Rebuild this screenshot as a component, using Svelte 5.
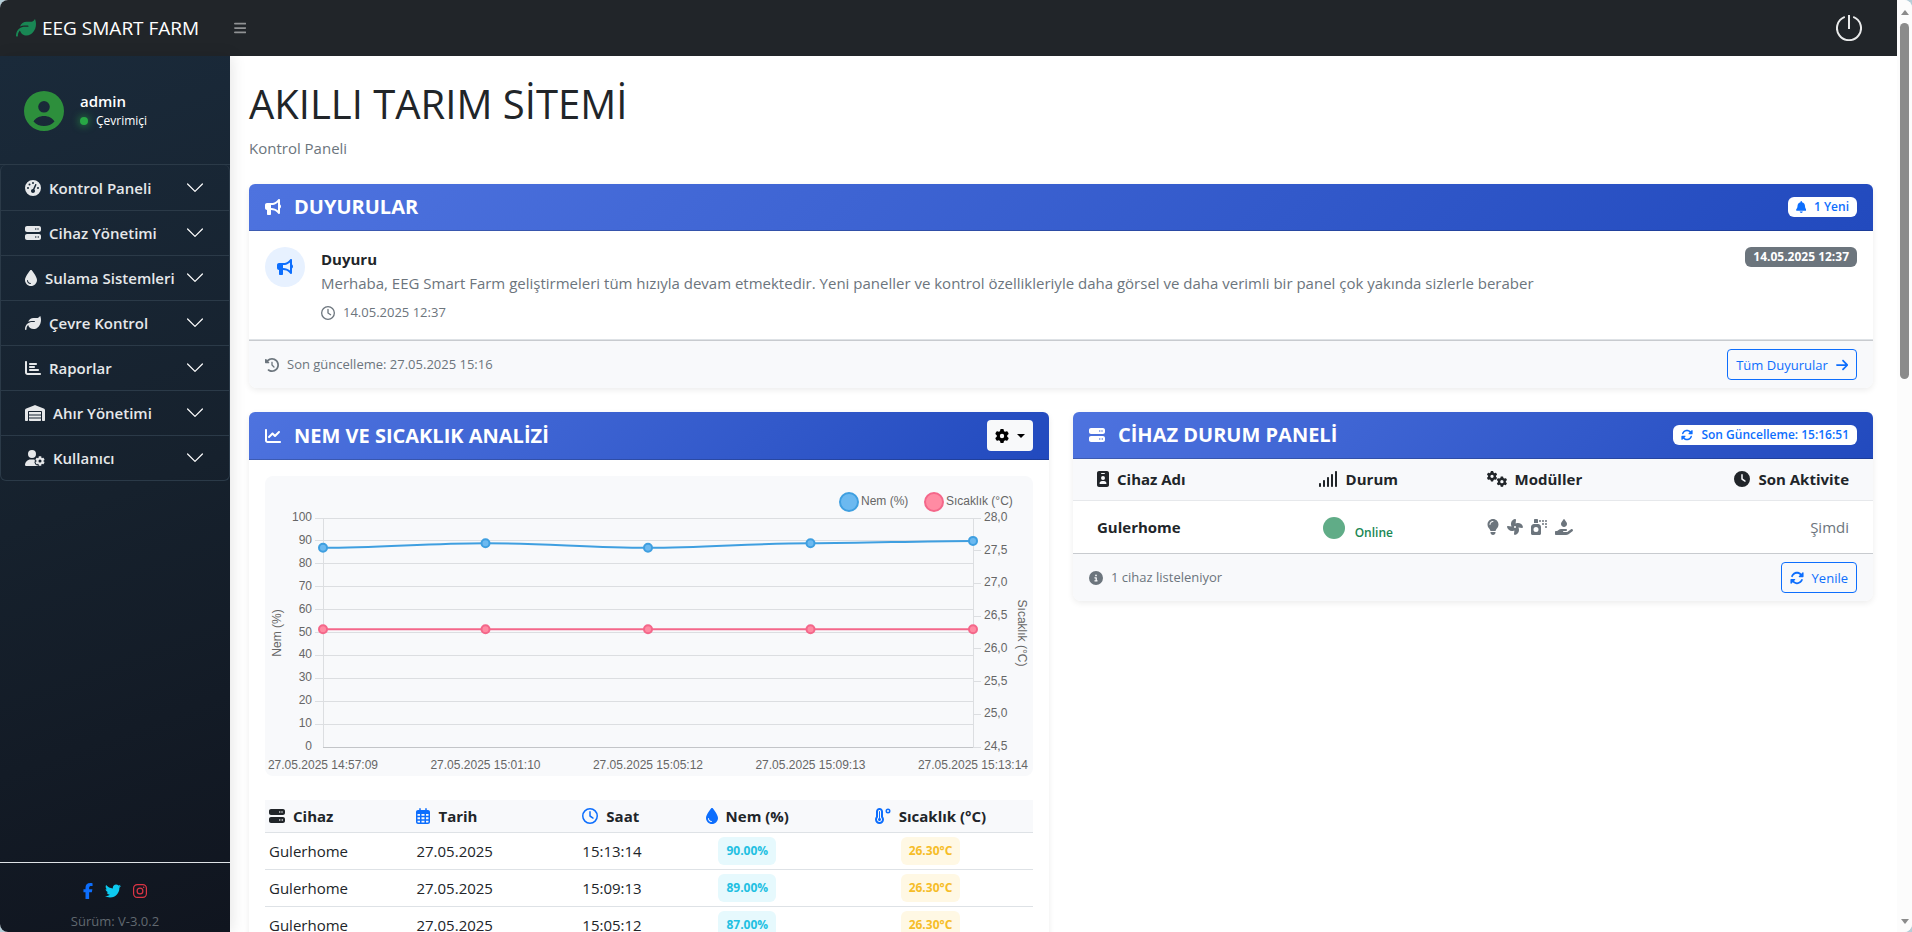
<script lang="ts">
  type IconShape = { w: number; d: string; copies?: string[] }

  const gearPath =
    'M495.9 166.6c3.2 8.7 .5 18.4-6.4 24.6l-43.3 39.4c1.1 8.3 1.7 16.8 1.7 25.4s-.6 17.1-1.7 25.4l43.3 39.4c6.9 6.2 9.6 15.9 6.4 24.6c-4.4 11.9-9.7 23.3-15.8 34.3l-4.7 8.1c-6.6 11-14 21.4-22.1 31.2c-5.9 7.2-15.7 9.6-24.5 6.8l-55.7-17.7c-13.4 10.3-28.2 18.9-44 25.4l-12.5 57.1c-2 9.1-9 16.3-18.2 17.8c-13.8 2.3-28 3.5-42.5 3.5s-28.7-1.2-42.5-3.5c-9.2-1.5-16.2-8.7-18.2-17.8l-12.5-57.1c-15.8-6.5-30.6-15.1-44-25.4L83.1 425.9c-8.8 2.8-18.6 .3-24.5-6.8c-8.1-9.8-15.5-20.2-22.1-31.2l-4.7-8.1c-6.1-11-11.4-22.4-15.8-34.3c-3.2-8.7-.5-18.4 6.4-24.6l43.3-39.4C64.6 273.1 64 264.6 64 256s.6-17.1 1.7-25.4L22.4 191.2c-6.9-6.2-9.6-15.9-6.4-24.6c4.4-11.9 9.7-23.3 15.8-34.3l4.7-8.1c6.6-11 14-21.4 22.1-31.2c5.9-7.2 15.7-9.6 24.5-6.8l55.7 17.7c13.4-10.3 28.2-18.9 44-25.4l12.5-57.1c2-9.1 9-16.3 18.2-17.8C227.3 1.2 241.5 0 256 0s28.7 1.2 42.5 3.5c9.2 1.5 16.2 8.7 18.2 17.8l12.5 57.1c15.8 6.5 30.6 15.1 44 25.4l55.7-17.7c8.8-2.8 18.6-.3 24.5 6.8c8.1 9.8 15.5 20.2 22.1 31.2l4.7 8.1c6.1 11 11.4 22.4 15.8 34.3zM256 336a80 80 0 1 0 0-160 80 80 0 1 0 0 160z'

  const icons: Record<string, IconShape> = {
    leaf: { w: 512, d: 'M272 96c-78.6 0-145.1 51.5-167.7 122.5c33.6-17 71.5-26.5 111.7-26.5h88c8.8 0 16 7.2 16 16s-7.2 16-16 16H288 216s0 0 0 0c-16.6 0-32.7 1.9-48.3 5.4c-25.9 5.9-49.9 16.4-71.4 30.7c0 0 0 0 0 0C38.3 298.8 0 364.9 0 440v16c0 13.3 10.7 24 24 24s24-10.7 24-24V440c0-48.7 20.7-92.5 53.8-123.2C121.6 392.3 190.3 448 272 448l1 0c132.1-.7 239-130.9 239-291.4c0-42.6-7.5-83.1-21.1-119.6c-2.6-6.9-12.7-6.6-16.2-.1C455.9 72.1 418.7 96 376 96L272 96z' },
    bars: { w: 448, d: 'M0 96C0 78.3 14.3 64 32 64H416c17.7 0 32 14.3 32 32s-14.3 32-32 32H32C14.3 128 0 113.7 0 96zM0 256c0-17.7 14.3-32 32-32H416c17.7 0 32 14.3 32 32s-14.3 32-32 32H32c-17.7 0-32-14.3-32-32zM448 416c0 17.7-14.3 32-32 32H32c-17.7 0-32-14.3-32-32s14.3-32 32-32H416c17.7 0 32 14.3 32 32z' },
    gauge: { w: 512, d: 'M0 256a256 256 0 1 1 512 0A256 256 0 1 1 0 256zM288 96a32 32 0 1 0 -64 0 32 32 0 1 0 64 0zM256 416c35.3 0 64-28.7 64-64c0-17.4-6.9-33.1-18.1-44.6L366 161.7c5.3-12.1-.2-26.3-12.3-31.6s-26.3 .2-31.6 12.3L257.9 288c-.6 0-1.3 0-1.9 0c-35.3 0-64 28.7-64 64s28.7 64 64 64zM176 144a32 32 0 1 0 -64 0 32 32 0 1 0 64 0zM96 288a32 32 0 1 0 0-64 32 32 0 1 0 0 64zm352-32a32 32 0 1 0 -64 0 32 32 0 1 0 64 0z' },
    server: { w: 512, d: 'M64 32C28.7 32 0 60.7 0 96v64c0 35.3 28.7 64 64 64H448c35.3 0 64-28.7 64-64V96c0-35.3-28.7-64-64-64H64zm280 72a24 24 0 1 1 0 48 24 24 0 1 1 0-48zm48 24a24 24 0 1 1 48 0 24 24 0 1 1 -48 0zM64 288c-35.3 0-64 28.7-64 64v64c0 35.3 28.7 64 64 64H448c35.3 0 64-28.7 64-64V352c0-35.3-28.7-64-64-64H64zm280 72a24 24 0 1 1 0 48 24 24 0 1 1 0-48zm56 24a24 24 0 1 1 48 0 24 24 0 1 1 -48 0z' },
    droplet: { w: 384, d: 'M192 512C86 512 0 426 0 320C0 228.8 130.2 57.7 166.6 11.7C172.6 4.2 181.5 0 191.1 0h1.8c9.6 0 18.5 4.2 24.5 11.7C253.8 57.7 384 228.8 384 320c0 106-86 192-192 192zM96 336c0-8.8-7.2-16-16-16s-16 7.2-16 16c0 61.9 50.1 112 112 112c8.8 0 16-7.2 16-16s-7.2-16-16-16c-44.2 0-80-35.8-80-80z' },
    chartBar: { w: 512, d: 'M32 32c17.7 0 32 14.3 32 32V400c0 8.8 7.2 16 16 16H480c17.7 0 32 14.3 32 32s-14.3 32-32 32H80c-44.2 0-80-35.8-80-80V64C0 46.3 14.3 32 32 32zm96 96c0-17.7 14.3-32 32-32l192 0c17.7 0 32 14.3 32 32s-14.3 32-32 32l-192 0c-17.7 0-32-14.3-32-32zm32 64H288c17.7 0 32 14.3 32 32s-14.3 32-32 32H160c-17.7 0-32-14.3-32-32s14.3-32 32-32zm0 96H416c17.7 0 32 14.3 32 32s-14.3 32-32 32H160c-17.7 0-32-14.3-32-32s14.3-32 32-32z' },
    warehouse: { w: 640, d: 'M0 488V171.3c0-26.2 15.9-49.7 40.2-59.4L308.1 4.8c7.6-3.1 16.1-3.1 23.8 0L599.8 111.9c24.3 9.7 40.2 33.3 40.2 59.4V488c0 13.3-10.7 24-24 24H568c-13.3 0-24-10.7-24-24V224c0-17.7-14.3-32-32-32H128c-17.7 0-32 14.3-32 32V488c0 13.3-10.7 24-24 24H24c-13.3 0-24-10.7-24-24zm488 24l-336 0c-13.3 0-24-10.7-24-24V432H512l0 56c0 13.3-10.7 24-24 24zM128 400V336H512v64H128zm0-96V224H512l0 80H128z' },
    userGear: { w: 640, d: 'M224 0a128 128 0 1 1 0 256A128 128 0 1 1 224 0zM178.3 304h91.4c11.8 0 23.4 1.2 34.5 3.3c-2.1 18.5 7.4 35.6 21.8 44.8c-16.6 10.6-26.7 31.6-20 53.3c4 12.9 9.4 25.5 16.4 37.6s15.2 23.1 24.4 33c15.7 16.9 39.6 18.4 57.2 8.7v.9c0 9.2 2.7 18.5 7.9 26.3H29.7C13.3 512 0 498.7 0 482.3C0 383.8 79.8 304 178.3 304zM436 218.2c0-7 4.5-13.3 11.3-14.8c10.5-2.4 21.5-3.7 32.7-3.7s22.2 1.3 32.7 3.7c6.8 1.5 11.3 7.8 11.3 14.8v30.6c7.9 3.4 15.4 7.7 22.3 12.8l24.9-14.3c6.1-3.5 13.7-2.7 18.5 2.4c7.6 8.1 14.3 17.2 20.1 27.2s10.3 20.4 13.5 31c2.1 6.7-1.1 13.7-7.2 17.2l-25 14.4c.4 4 .7 8.1 .7 12.3s-.2 8.2-.7 12.3l25 14.4c6.1 3.5 9.2 10.5 7.2 17.2c-3.3 10.6-7.8 21-13.5 31s-12.5 19.1-20.1 27.2c-4.8 5.1-12.5 5.9-18.5 2.4l-24.9-14.3c-6.9 5.1-14.3 9.4-22.3 12.8l0 30.6c0 7-4.5 13.3-11.3 14.8c-10.5 2.4-21.5 3.7-32.7 3.7s-22.2-1.3-32.7-3.7c-6.8-1.5-11.3-7.8-11.3-14.8V454.8c-8-3.4-15.6-7.7-22.5-12.9l-24.7 14.3c-6.1 3.5-13.7 2.7-18.5-2.4c-7.6-8.1-14.3-17.2-20.1-27.2s-10.3-20.4-13.5-31c-2.1-6.7 1.1-13.7 7.2-17.2l24.8-14.3c-.4-4.1-.7-8.2-.7-12.4s.2-8.3 .7-12.4L343.8 325c-6.1-3.5-9.2-10.5-7.2-17.2c3.3-10.6 7.7-21 13.5-31s12.5-19.1 20.1-27.2c4.8-5.1 12.4-5.9 18.5-2.4l24.8 14.3c6.9-5.1 14.5-9.4 22.5-12.9V218.2zm92.1 133.5a48.1 48.1 0 1 0 -96.1 0 48.1 48.1 0 1 0 96.1 0z' },
    facebook: { w: 320, d: 'M80 299.3V512H196V299.3h86.5l18-97.8H196V166.9c0-51.7 20.3-71.5 72.7-71.5c16.3 0 29.4 .4 37 1.2V7.9C291.4 4 256.4 0 236.2 0C129.3 0 80 50.5 80 159.4v42.1H14v97.8H80z' },
    twitter: { w: 512, d: 'M459.37 151.716c.325 4.548.325 9.097.325 13.645 0 138.72-105.583 298.558-298.558 298.558-59.452 0-114.68-17.219-161.137-47.106 8.447.974 16.568 1.299 25.34 1.299 49.055 0 94.213-16.568 130.274-44.832-46.132-.975-84.792-31.188-98.112-72.772 6.498.974 12.995 1.624 19.818 1.624 9.421 0 18.843-1.3 27.614-3.573-48.081-9.747-84.143-51.98-84.143-102.985v-1.299c13.969 7.797 30.214 12.67 47.431 13.319-28.264-18.843-46.781-51.005-46.781-87.391 0-19.492 5.197-37.36 14.294-52.954 51.655 63.675 129.3 105.258 216.365 109.807-1.624-7.797-2.599-15.918-2.599-24.04 0-57.828 46.782-104.934 104.934-104.934 30.213 0 57.502 12.67 76.67 33.137 23.715-4.548 46.456-13.32 66.599-25.34-7.798 24.366-24.366 44.833-46.132 57.827 21.117-2.273 41.584-8.122 60.426-16.243-14.292 20.791-32.161 39.308-52.628 54.253z' },
    bullhorn: { w: 512, d: 'M480 32c0-12.9-7.8-24.6-19.8-29.6s-25.7-2.2-34.9 6.9L381.7 53c-48 48-113.1 75-181 75H192 160 64c-35.3 0-64 28.7-64 64v96c0 35.3 28.7 64 64 64l0 128c0 17.7 14.3 32 32 32h64c17.7 0 32-14.3 32-32V352l8.7 0c67.9 0 133 27 181 75l43.6 43.6c9.2 9.2 22.9 11.9 34.9 6.9s19.8-16.6 19.8-29.6V300.4c18.6-8.8 32-32.5 32-60.4s-13.4-51.6-32-60.4V32zm-64 76.7V240 371.3C357.2 317.8 280.5 288 200.7 288H192V192h8.7c79.8 0 156.5-29.8 215.3-83.3z' },
    bell: { w: 448, d: 'M224 0c-17.7 0-32 14.3-32 32V51.2C119 66 64 130.6 64 208v18.8c0 47-17.3 92.4-48.5 127.6l-7.4 8.3c-8.4 9.4-10.4 22.9-5.3 34.4S19.4 416 32 416H416c12.6 0 24-7.4 29.2-18.9s3.1-25-5.3-34.4l-7.4-8.3C401.3 319.2 384 273.9 384 226.8V208c0-77.4-55-142-128-156.8V32c0-17.7-14.3-32-32-32zm45.3 493.3c12-12 18.7-28.3 18.7-45.3H224 160c0 17 6.7 33.3 18.7 45.3s28.3 18.7 45.3 18.7s33.3-6.7 45.3-18.7z' },
    clock: { w: 512, d: 'M464 256A208 208 0 1 1 48 256a208 208 0 1 1 416 0zM0 256a256 256 0 1 0 512 0A256 256 0 1 0 0 256zM232 120V256c0 8 4 15.5 10.7 20l96 64c11 7.4 25.9 4.4 33.3-6.7s4.4-25.9-6.7-33.3L280 243.2V120c0-13.3-10.7-24-24-24s-24 10.7-24 24z' },
    clockSolid: { w: 512, d: 'M256 0a256 256 0 1 1 0 512A256 256 0 1 1 256 0zM232 120V256c0 8 4 15.5 10.7 20l96 64c11 7.4 25.9 4.4 33.3-6.7s4.4-25.9-6.7-33.3L280 243.2V120c0-13.3-10.7-24-24-24s-24 10.7-24 24z' },
    history: { w: 512, d: 'M75 75L41 41C25.9 25.9 0 36.6 0 57.9V168c0 13.3 10.7 24 24 24H134.1c21.4 0 32.1-25.9 17-41l-30.8-30.8C155 85.5 203 64 256 64c106 0 192 86 192 192s-86 192-192 192c-40.8 0-78.6-12.7-109.7-34.4c-14.5-10.1-34.4-6.6-44.6 7.9s-6.6 34.4 7.9 44.6C151.2 495 201.7 512 256 512c141.4 0 256-114.6 256-256S397.4 0 256 0C185.3 0 121.3 28.7 75 75zm181 53c-13.3 0-24 10.7-24 24V256c0 6.4 2.5 12.5 7 17l72 72c9.4 9.4 24.6 9.4 33.9 0s9.4-24.6 0-33.9l-65-65V152c0-13.3-10.7-24-24-24z' },
    arrowRight: { w: 448, d: 'M438.6 278.6c12.5-12.5 12.5-32.8 0-45.3l-160-160c-12.5-12.5-32.8-12.5-45.3 0s-12.5 32.8 0 45.3L338.8 224 32 224c-17.7 0-32 14.3-32 32s14.3 32 32 32l306.7 0L233.4 393.4c-12.5 12.5-12.5 32.8 0 45.3s32.8 12.5 45.3 0l160-160z' },
    chartLine: { w: 512, d: 'M64 64c0-17.7-14.3-32-32-32S0 46.3 0 64V400c0 44.2 35.8 80 80 80H480c17.7 0 32-14.3 32-32s-14.3-32-32-32H80c-8.8 0-16-7.2-16-16V64zm406.6 86.6c12.5-12.5 12.5-32.8 0-45.3s-32.8-12.5-45.3 0L320 210.7l-57.4-57.4c-12.5-12.5-32.8-12.5-45.3 0l-112 112c-12.5 12.5-12.5 32.8 0 45.3s32.8 12.5 45.3 0L240 221.3l57.4 57.4c12.5 12.5 32.8 12.5 45.3 0l128-128z' },
    gear: { w: 512, d: gearPath },
    gears: { w: 640, d: gearPath, copies: ['translate(-8 0) scale(.66)', 'translate(308 172) scale(.66)'] },
    rotate: { w: 512, d: 'M142.9 142.9c62.2-62.2 162.7-62.5 225.3-1L327 183c-6.9 6.9-8.9 17.2-5.2 26.2s12.5 14.8 22.2 14.8H463.5c0 0 0 0 0 0H472c13.3 0 24-10.7 24-24V72c0-9.7-5.8-18.5-14.8-22.2s-19.3-1.7-26.2 5.2L413.4 96.6c-87.6-86.5-228.7-86.2-315.8 1C73.2 122 55.6 150.7 44.8 181.4c-5.9 16.7 2.9 34.9 19.5 40.8s34.9-2.9 40.8-19.5c7.7-21.8 20.2-42.3 37.8-59.8zM16 312v7.6 .7V440c0 9.7 5.8 18.5 14.8 22.2s19.3 1.7 26.2-5.2l41.6-41.6c87.6 86.5 228.7 86.2 315.8-1c24.4-24.4 42.1-53.1 52.9-83.7c5.9-16.7-2.9-34.9-19.5-40.8s-34.9 2.9-40.8 19.5c-7.7 21.8-20.2 42.3-37.8 59.8c-62.2 62.2-162.7 62.5-225.3 1L185 329c6.9-6.9 8.9-17.2 5.2-26.2s-12.5-14.8-22.2-14.8H48.4h-.7H40c-13.3 0-24 10.7-24 24z' },
    info: { w: 512, d: 'M256 512A256 256 0 1 0 256 0a256 256 0 1 0 0 512zM216 336h24V272H216c-13.3 0-24-10.7-24-24s10.7-24 24-24h48c13.3 0 24 10.7 24 24v88h8c13.3 0 24 10.7 24 24s-10.7 24-24 24H216c-13.3 0-24-10.7-24-24s10.7-24 24-24zm40-208a32 32 0 1 1 0 64 32 32 0 1 1 0-64z' },
    idBadge: { w: 384, d: 'M64 0C28.7 0 0 28.7 0 64V448c0 35.3 28.7 64 64 64H320c35.3 0 64-28.7 64-64V64c0-35.3-28.7-64-64-64H64zm96 320h64c44.2 0 80 35.8 80 80c0 8.8-7.2 16-16 16H96c-8.8 0-16-7.2-16-16c0-44.2 35.8-80 80-80zm-32-96a64 64 0 1 1 128 0 64 64 0 1 1 -128 0zM144 64h96c8.8 0 16 7.2 16 16s-7.2 16-16 16H144c-8.8 0-16-7.2-16-16s7.2-16 16-16z' },
    signal: { w: 640, d: 'M576 0c17.7 0 32 14.3 32 32V480c0 17.7-14.3 32-32 32s-32-14.3-32-32V32c0-17.7 14.3-32 32-32zM448 96c17.7 0 32 14.3 32 32V480c0 17.7-14.3 32-32 32s-32-14.3-32-32V128c0-17.7 14.3-32 32-32zM352 224V480c0 17.7-14.3 32-32 32s-32-14.3-32-32V224c0-17.7 14.3-32 32-32s32 14.3 32 32zM192 288c17.7 0 32 14.3 32 32V480c0 17.7-14.3 32-32 32s-32-14.3-32-32V320c0-17.7 14.3-32 32-32zM96 416v64c0 17.7-14.3 32-32 32s-32-14.3-32-32V416c0-17.7 14.3-32 32-32s32 14.3 32 32z' },
    lightbulb: { w: 384, d: 'M272 384c9.6-31.9 29.5-59.1 49.2-86.2l0 0c5.2-7.1 10.4-14.2 15.4-21.4c19.8-28.5 31.4-63 31.4-100.3C368 78.8 289.2 0 192 0S16 78.8 16 176c0 37.3 11.6 71.9 31.4 100.3c5 7.2 10.2 14.3 15.4 21.4l0 0c19.8 27.1 39.7 54.4 49.2 86.2H272zM192 512c44.2 0 80-35.8 80-80V416H112v16c0 44.2 35.8 80 80 80zM112 176c0 8.8-7.2 16-16 16s-16-7.2-16-16c0-61.9 50.1-112 112-112c8.8 0 16 7.2 16 16s-7.2 16-16 16c-44.2 0-80 35.8-80 80z' },
    fan: { w: 512, d: 'M258.6 0c-1.7 0-3.4 .1-5.1 .5C168 17 115.6 102.3 130.5 189.3c2.9 17 8.4 32.9 15.9 47.4L32 224H29.4C13.2 224 0 237.2 0 253.4c0 1.7 .1 3.4 .5 5.1C17 344 102.3 396.4 189.3 381.5c17-2.9 32.9-8.4 47.4-15.9L224 480v2.6c0 16.2 13.2 29.4 29.4 29.4c1.7 0 3.4-.1 5.1-.5C344 495 396.4 409.7 381.5 322.7c-2.9-17-8.4-32.9-15.9-47.4L480 288h2.6c16.2 0 29.4-13.2 29.4-29.4c0-1.7-.1-3.4-.5-5.1C495 168 409.7 115.6 322.7 130.5c-17 2.9-32.9 8.4-47.4 15.9L288 32V29.4C288 13.2 274.8 0 258.6 0zM256 224a32 32 0 1 1 0 64 32 32 0 1 1 0-64z' },
    spray: { w: 512, d: 'M128 0h64c17.7 0 32 14.3 32 32v96H96V32c0-17.7 14.3-32 32-32zM0 256c0-53 43-96 96-96H224c53 0 96 43 96 96V464c0 26.5-21.5 48-48 48H48c-26.5 0-48-21.5-48-48V256zm240 80A80 80 0 1 0 80 336a80 80 0 1 0 160 0zM256 64a32 32 0 1 1 64 0 32 32 0 1 1 -64 0zM384 32a32 32 0 1 1 0 64 32 32 0 1 1 0-64zm64 32a32 32 0 1 1 64 0 32 32 0 1 1 -64 0zm32 64a32 32 0 1 1 0 64 32 32 0 1 1 0-64zm0 96a32 32 0 1 1 0 64 32 32 0 1 1 0-64zM352 160a32 32 0 1 1 64 0 32 32 0 1 1 -64 0z' },
    handDroplet: { w: 576, d: 'M275.5 6.6C278.3 2.5 283 0 288 0s9.7 2.5 12.5 6.6L366.8 103C378 119.3 384 138.6 384 158.3V160c0 53-43 96-96 96s-96-43-96-96v-1.7c0-19.8 6-39 17.2-55.3L275.5 6.6zM568.2 336.3c13.1 17.8 9.3 42.8-8.5 55.9L433.1 485.5c-23.4 17.2-51.6 26.5-80.7 26.5H192 32c-17.7 0-32-14.3-32-32V416c0-17.7 14.3-32 32-32H68.8l44.9-36c22.7-18.2 50.9-28 80-28H272h16 64c17.7 0 32 14.3 32 32s-14.3 32-32 32H288 272c-8.8 0-16 7.2-16 16s7.2 16 16 16H392.6l119.7-88.2c17.8-13.1 42.8-9.3 55.9 8.5z' },
    calendar: { w: 448, d: 'M128 0c13.3 0 24 10.7 24 24V64H296V24c0-13.3 10.7-24 24-24s24 10.7 24 24V64h40c35.3 0 64 28.7 64 64V448c0 35.3-28.7 64-64 64H64c-35.3 0-64-28.7-64-64V128C0 92.7 28.7 64 64 64h40V24c0-13.3 10.7-24 24-24zM48 192v56h80V192zM176 192v56h96V192zM320 192v56h80V192zM48 296v64h80V296zM176 296v64h96V296zM320 296v64h80V296zM48 408v40c0 8.8 7.2 16 16 16h64V408zM176 408v56h96V408zM320 408v56h64c8.8 0 16-7.2 16-16V408z' },
    temperature: { w: 512, d: 'M416 64a32 32 0 1 1 0 64 32 32 0 1 1 0-64zm0 112A80 80 0 1 0 416 16a80 80 0 1 0 0 160zM96 112c0-26.5 21.5-48 48-48s48 21.5 48 48V276.5c0 17.3 7.1 31.9 15.3 42.5C217.8 332.6 224 349.5 224 368c0 44.2-35.8 80-80 80s-80-35.8-80-80c0-18.5 6.2-35.4 16.7-48.9C88.9 308.5 96 293.9 96 276.5V112zM144 0C82.1 0 32 50.2 32 112V276.5c0 .1-.1 .3-.2 .6c-.2 .6-.8 1.6-1.7 2.8C11.2 304.2 0 334.8 0 368c0 79.5 64.5 144 144 144s144-64.5 144-144c0-33.2-11.2-63.8-30.1-88.1c-.9-1.2-1.5-2.2-1.7-2.8c-.1-.3-.2-.5-.2-.6V112C256 50.2 205.9 0 144 0zm0 416c26.5 0 48-21.5 48-48c0-20.9-13.4-38.7-32-45.3V112c0-8.8-7.2-16-16-16s-16 7.2-16 16V322.7c-18.6 6.6-32 24.4-32 45.3c0 26.5 21.5 48 48 48z' }
  }

  const menu = [
    { icon: 'gauge', label: 'Kontrol Paneli' },
    { icon: 'server', label: 'Cihaz Yönetimi' },
    { icon: 'droplet', label: 'Sulama Sistemleri' },
    { icon: 'leaf', label: 'Çevre Kontrol' },
    { icon: 'chartBar', label: 'Raporlar' },
    { icon: 'warehouse', label: 'Ahır Yönetimi' },
    { icon: 'userGear', label: 'Kullanıcı' }
  ]

  const readings = [
    { date: '27.05.2025', time: '15:13:14', hum: 90, temp: 26.3 },
    { date: '27.05.2025', time: '15:09:13', hum: 89, temp: 26.3 },
    { date: '27.05.2025', time: '15:05:12', hum: 87, temp: 26.3 },
    { date: '27.05.2025', time: '15:01:10', hum: 89, temp: 26.3 },
    { date: '27.05.2025', time: '14:57:09', hum: 87, temp: 26.3 }
  ]

  // the table lists the newest samples, the chart plots all of them
  const latest = readings.slice(0, 3)

  // chart geometry
  const left = 58
  const right = 708
  const top = 42
  const bottom = 271
  const points = [...readings].reverse()
  const px = (i: number) => left + (i * (right - left)) / (points.length - 1)
  const humY = (v: number) => bottom - ((bottom - top) * v) / 100
  const tempY = (v: number) => bottom - ((bottom - top) * (v - 24.5)) / 3.5
  const humTicks = Array.from({ length: 11 }, (_, i) => i * 10)
  const tempTicks = Array.from({ length: 8 }, (_, i) => 24.5 + i * 0.5)

  // horizontal control handles keep the curve smooth between samples
  function smooth(ys: number[]) {
    return ys
      .map((y, i) => {
        if (i === 0) return `M${px(0)} ${y}`
        const mid = (px(i) - px(i - 1)) * 0.35
        return `C${px(i - 1) + mid} ${ys[i - 1]} ${px(i) - mid} ${y} ${px(i)} ${y}`
      })
      .join('')
  }

  const humPath = smooth(points.map((p) => humY(p.hum)))
  const tempPath = smooth(points.map((p) => tempY(p.temp)))
</script>

{#snippet icon(name: string, size = 16)}
  {@const shape = icons[name]}
  <svg class="icon" viewBox="0 0 {shape.w} 512" width={(shape.w / 512) * size} height={size} aria-hidden="true">
    {#each shape.copies ?? [''] as transform}
      <path d={shape.d} fill="currentColor" fill-rule="evenodd" transform={transform || undefined} />
    {/each}
  </svg>
{/snippet}

<div class="window">
  <div class="page">
    <nav class="topbar">
      <a class="brand" href="#home"><span class="leaf">{@render icon('leaf', 20)}</span>EEG SMART FARM</a>
      <button class="toggle" type="button" aria-label="Menü">{@render icon('bars', 14)}</button>
      <a class="power" href="#logout" aria-label="Çıkış">
        <svg viewBox="0 0 26 26" width="26" height="26" fill="none" stroke="currentColor" stroke-width="2">
          <path d="M8.8 1.9a12 12 0 1 0 8.4 0M13 0v14" />
        </svg>
      </a>
    </nav>

    <div class="layout">
      <aside class="sidebar">
        <div class="user">
          <svg viewBox="0 0 40 40" width="40" height="40" aria-hidden="true">
            <path fill="#2d8f3c" fill-rule="evenodd" d="M20 0a20 20 0 1 1 0 40a20 20 0 1 1 0-40zM20 10a5.8 5.8 0 1 0 0 11.6a5.8 5.8 0 1 0 0-11.6zM20 25c-4.6 0-8.5 2.2-10.5 5.4c2.7 2.9 6.4 4.6 10.5 4.6s7.8-1.7 10.5-4.6c-2-3.2-5.9-5.4-10.5-5.4z" />
          </svg>
          <div>
            <strong>admin</strong>
            <span class="status"><i></i>Çevrimiçi</span>
          </div>
        </div>

        <div class="menu">
          {#each menu as item (item.label)}
            <button type="button" aria-expanded="false">
              {@render icon(item.icon)}
              <span>{item.label}</span>
              <svg class="chevron" viewBox="0 0 16 16" width="16" height="16" fill="none" stroke="currentColor" stroke-linecap="round" stroke-linejoin="round" stroke-width="1.2">
                <path d="M0.6 4L8 11.4L15.4 4" />
              </svg>
            </button>
          {/each}
        </div>

        <footer class="sidebar-footer">
          <div class="social">
            <a class="facebook" href="#facebook" aria-label="Facebook">{@render icon('facebook')}</a>
            <a class="twitter" href="#twitter" aria-label="Twitter">{@render icon('twitter')}</a>
            <a class="instagram" href="#instagram" aria-label="Instagram">
              <svg class="icon" viewBox="0 0 14 14" width="14" height="14" fill="none" stroke="currentColor" stroke-width="1.2">
                <rect x=".6" y=".6" width="12.8" height="12.8" rx="3.6" />
                <circle cx="7" cy="7" r="2.9" />
                <circle cx="10.7" cy="3.3" r=".8" fill="currentColor" stroke="none" />
              </svg>
            </a>
          </div>
          <small>Sürüm: V-3.0.2</small>
        </footer>
      </aside>

      <main>
        <h1>AKILLI TARIM SİTEMİ</h1>
        <p class="crumb">Kontrol Paneli</p>

        <section class="card">
          <header>
            <h2>{@render icon('bullhorn')}DUYURULAR</h2>
            <span class="badge light">{@render icon('bell', 12)}1 Yeni</span>
          </header>
          <article>
            <div class="circle">{@render icon('bullhorn')}</div>
            <div class="news">
              <h3>Duyuru</h3>
              <p>Merhaba, EEG Smart Farm geliştirmeleri tüm hızıyla devam etmektedir. Yeni paneller ve kontrol özellikleriyle daha görsel ve daha verimli bir panel çok yakında sizlerle beraber</p>
              <small>{@render icon('clock', 14)}14.05.2025 12:37</small>
            </div>
            <span class="badge gray">14.05.2025 12:37</span>
          </article>
          <footer>
            <small>{@render icon('history', 14)}Son güncelleme: 27.05.2025 15:16</small>
            <a class="outline" href="#duyurular">Tüm Duyurular{@render icon('arrowRight', 14)}</a>
          </footer>
        </section>

        <div class="columns">
          <section class="card">
            <header>
              <h2>{@render icon('chartLine')}NEM VE SICAKLIK ANALİZİ</h2>
              <button class="settings" type="button" aria-label="Ayarlar">{@render icon('gear', 14)}<i></i></button>
            </header>
            <div class="body">
              <svg class="chart" viewBox="0 0 768 300" role="img" aria-label="Nem ve sıcaklık grafiği">
                {#each humTicks as tick}
                  <line class="grid" class:base={tick === 0} x1={tick === 0 ? left : 50} x2={right} y1={humY(tick)} y2={humY(tick)} />
                  <text x="47" y={humY(tick) + 3} text-anchor="end">{tick}</text>
                {/each}
                {#each tempTicks as tick}
                  <line class="grid" x1={right} x2={right + 8} y1={tempY(tick)} y2={tempY(tick)} />
                  <text x={right + 11} y={tempY(tick) + 3}>{tick.toFixed(1).replace('.', ',')}</text>
                {/each}
                <line class="grid" x1={left} x2={left} y1={top} y2={bottom} />
                <line class="grid" x1={right} x2={right} y1={top} y2={bottom} />
                {#each points as point, i}
                  <text x={px(i)} y="293" text-anchor="middle">{point.date} {point.time}</text>
                {/each}
                <text text-anchor="middle" transform="translate(16 157) rotate(-90)">Nem (%)</text>
                <text text-anchor="middle" transform="translate(753 157) rotate(90)">Sıcaklık (°C)</text>

                <path class="temp line" d={tempPath} />
                <path class="hum line" d={humPath} />
                {#each points as point, i}
                  <circle class="temp" cx={px(i)} cy={tempY(point.temp)} r="4" />
                  <circle class="hum" cx={px(i)} cy={humY(point.hum)} r="4" />
                {/each}

                <circle class="hum" cx="584" cy="26" r="9" />
                <text x="596" y="29">Nem (%)</text>
                <circle class="temp" cx="669" cy="26" r="9" />
                <text x="681" y="29">Sıcaklık (°C)</text>
              </svg>

              <table class="readings">
                <colgroup>
                  <col class="c-device" /><col class="c-date" /><col class="c-time" /><col class="c-hum" /><col />
                </colgroup>
                <thead>
                  <tr>
                    <th><span>{@render icon('server')}Cihaz</span></th>
                    <th><span class="blue">{@render icon('calendar')}Tarih</span></th>
                    <th><span class="blue">{@render icon('clock')}Saat</span></th>
                    <th class="center"><span class="blue">{@render icon('droplet')}Nem (%)</span></th>
                    <th class="center"><span class="blue">{@render icon('temperature')}Sıcaklık (°C)</span></th>
                  </tr>
                </thead>
                <tbody>
                  {#each latest as row (row.time)}
                    <tr>
                      <td>Gulerhome</td>
                      <td>{row.date}</td>
                      <td>{row.time}</td>
                      <td class="center"><span class="pill cyan">{row.hum.toFixed(2)}%</span></td>
                      <td class="center"><span class="pill amber">{row.temp.toFixed(2)}°C</span></td>
                    </tr>
                  {/each}
                </tbody>
              </table>
            </div>
          </section>

          <section class="card">
            <header>
              <h2>{@render icon('server')}CİHAZ DURUM PANELİ</h2>
              <span class="badge light">{@render icon('rotate', 12)}Son Güncelleme: 15:16:51</span>
            </header>
            <table class="devices">
              <colgroup>
                <col class="c-name" /><col class="c-state" /><col class="c-mods" /><col />
              </colgroup>
              <thead>
                <tr>
                  <th><span>{@render icon('idBadge')}Cihaz Adı</span></th>
                  <th class="center"><span>{@render icon('signal')}Durum</span></th>
                  <th><span>{@render icon('gears')}Modüller</span></th>
                  <th class="end"><span>{@render icon('clockSolid')}Son Aktivite</span></th>
                </tr>
              </thead>
              <tbody>
                <tr>
                  <td><strong>Gulerhome</strong></td>
                  <td class="center"><span class="online"><i></i>Online</span></td>
                  <td>
                    <span class="modules">
                      {@render icon('lightbulb')}
                      {@render icon('fan')}
                      {@render icon('spray')}
                      {@render icon('handDroplet')}
                    </span>
                  </td>
                  <td class="end muted">Şimdi</td>
                </tr>
              </tbody>
            </table>
            <footer>
              <small>{@render icon('info', 14)}1 cihaz listeleniyor</small>
              <button class="outline" type="button">{@render icon('rotate', 14)}Yenile</button>
            </footer>
          </section>
        </div>
      </main>
    </div>
  </div>

  <div class="scrollbar" aria-hidden="true">
    <i class="up"></i>
    <i class="thumb"></i>
    <i class="down"></i>
  </div>
</div>

<style>
  :global(body) {
    background: #b5ced8;
  }

  .window {
    display: flex;
    height: 100vh;
    overflow: hidden;
    border-radius: 8px;
    background: #fff;
    color: #212529;
    font-family: "Open Sans", "Noto Sans", sans-serif;
    font-size: 15px;
    line-height: 24px;
  }

  .window :global(*) {
    box-sizing: border-box;
  }

  .page {
    display: flex;
    flex: 1;
    flex-direction: column;
    min-width: 0;
  }

  button {
    border: 0;
    background: none;
    font: inherit;
    cursor: pointer;
  }

  a {
    text-decoration: none;
  }

  .icon {
    display: block;
    flex: none;
  }

  .topbar {
    display: flex;
    align-items: center;
    height: 56px;
    flex: none;
    padding: 0 35px 0 16px;
    background: #212529;
  }

  .brand {
    display: flex;
    align-items: center;
    gap: 6px;
    width: 213px;
    color: #fff;
    font-size: 19px;
  }

  .leaf {
    color: #198754;
  }

  .toggle {
    padding: 5px;
    color: #909294;
  }

  .power {
    display: flex;
    margin-left: auto;
    color: #e9eaea;
  }

  .layout {
    display: flex;
    flex: 1;
    min-height: 0;
  }

  .sidebar {
    display: flex;
    flex: none;
    flex-direction: column;
    width: 230px;
    background: linear-gradient(160deg, #1a2a3a, #16212d 50%, #10151f);
    box-shadow: 2px 0 14px rgba(0, 0, 0, 0.1);
  }

  .user {
    display: flex;
    align-items: center;
    gap: 16px;
    height: 109px;
    flex: none;
    padding: 2px 24px 0;
    border-bottom: 1px solid #2b3a48;
    color: #fff;
  }

  .user strong {
    display: block;
    font-weight: 600;
    line-height: 20px;
  }

  .status {
    display: flex;
    align-items: center;
    gap: 8px;
    font-size: 12px;
    line-height: 20px;
  }

  .status i {
    width: 8px;
    height: 8px;
    border-radius: 50%;
    background: #28a745;
    box-shadow: 0 0 8px #28a745;
  }

  .menu {
    display: flex;
    flex-direction: column;
    border: 1px solid #2b3a48;
    border-top: 0;
    border-radius: 6px;
  }

  .menu button {
    display: flex;
    align-items: center;
    gap: 8px;
    height: 45px;
    padding: 0 26px 0 24px;
    color: #e6e8ea;
    font-weight: 600;
  }

  .menu button + button {
    border-top: 1px solid #2b3a48;
  }

  .chevron {
    margin-left: auto;
    color: #fff;
  }

  .sidebar-footer {
    display: flex;
    align-items: center;
    flex-direction: column;
    gap: 8px;
    margin-top: auto;
    padding-top: 16px;
    border-top: 1px solid #dee2e6;
    color: #616970;
  }

  .social {
    display: flex;
    align-items: center;
    gap: 12px;
    height: 24px;
  }

  .facebook {
    color: #0d6efd;
  }

  .twitter {
    color: #0dcaf0;
  }

  .instagram {
    color: #dc3545;
  }

  main {
    flex: 1;
    min-width: 0;
    padding: 24px 24px 0 19px;
  }

  h1,
  h2,
  h3,
  p {
    margin: 0;
  }

  h1 {
    font-size: 40px;
    font-weight: 500;
    line-height: 48px;
  }

  .crumb {
    margin: 8px 0 24px;
    color: #6c757d;
  }

  .card {
    border-radius: 8px;
    background: #fff;
    box-shadow: 0 2px 6px rgba(0, 0, 0, 0.08);
  }

  .card > header {
    display: flex;
    align-items: center;
    justify-content: space-between;
    padding: 8px 16px;
    border-bottom: 1px solid rgba(0, 0, 0, 0.2);
    border-radius: 6px 6px 0 0;
    background: linear-gradient(135deg, #4e73df, #224abe);
    color: #fff;
  }

  h2 {
    display: flex;
    align-items: center;
    gap: 13px;
    font-size: 20px;
    font-weight: 700;
    line-height: 30px;
  }

  .badge {
    display: flex;
    align-items: center;
    gap: 8px;
    height: 20px;
    padding: 0 8px;
    border-radius: 6px;
    font-size: 12px;
    font-weight: 700;
  }

  .light {
    background: #fff;
    color: #0d6efd;
    font-weight: 600;
  }

  .gray {
    background: #6c757d;
    color: #fff;
  }

  article {
    display: flex;
    align-items: flex-start;
    gap: 16px;
    padding: 16px;
    border-bottom: 1px solid #dee2e6;
  }

  .circle {
    display: grid;
    place-items: center;
    width: 40px;
    height: 40px;
    border-radius: 50%;
    background: #e7f1ff;
    color: #0d6efd;
  }

  .news {
    flex: 1;
    color: #6c757d;
  }

  h3 {
    color: #212529;
    font-size: 15px;
    font-weight: 700;
  }

  small {
    display: flex;
    align-items: center;
    gap: 8px;
    font-size: 13px;
    line-height: 21px;
  }

  .news small {
    margin-top: 7px;
  }

  .card > footer {
    display: flex;
    align-items: center;
    justify-content: space-between;
    padding: 8px 16px;
    border-top: 1px solid #c8cbcf;
    border-radius: 0 0 8px 8px;
    background: #f8f9fb;
    color: #6c757d;
  }

  .outline {
    display: flex;
    align-items: center;
    gap: 8px;
    height: 31px;
    padding: 0 8px;
    border: 1px solid #0d6efd;
    border-radius: 4px;
    color: #0d6efd;
    font-size: 13px;
  }

  .columns {
    display: grid;
    grid-template-columns: repeat(2, minmax(0, 1fr));
    gap: 24px;
    align-items: start;
    margin-top: 24px;
  }

  .settings {
    display: flex;
    align-items: center;
    gap: 8px;
    height: 31px;
    padding: 0 8px;
    border-radius: 4px;
    background: #f8f9fa;
    color: #000;
  }

  .settings i {
    border: 4px solid transparent;
    border-top-color: #000;
    border-bottom: 0;
  }

  .body {
    padding: 16px;
  }

  .chart {
    display: block;
    width: 100%;
    border-radius: 8px;
    background: #f8f9fb;
  }

  .chart text {
    fill: #666;
    font-family: "Liberation Sans", Arial, sans-serif;
    font-size: 12px;
  }

  .grid {
    stroke: #dcdee1;
    shape-rendering: crispEdges;
  }

  .base {
    stroke: #c3c5c8;
  }

  .hum {
    fill: #6cb9f0;
    stroke: #3f9fe0;
    stroke-width: 2;
  }

  .temp {
    fill: #ff8ba3;
    stroke: #f4678a;
    stroke-width: 2;
  }

  .line {
    fill: none;
  }

  table {
    width: 100%;
    border-collapse: collapse;
    table-layout: fixed;
  }

  th,
  td {
    padding: 0 4px;
    text-align: left;
    white-space: nowrap;
  }

  th {
    background: #f8f9fb;
    font-weight: 700;
  }

  th span {
    display: inline-flex;
    align-items: center;
    gap: 8px;
    vertical-align: top;
  }

  .blue :global(svg) {
    color: #0d6efd;
  }

  .center {
    text-align: center;
  }

  .end {
    text-align: right;
  }

  .muted {
    color: #6c757d;
  }

  .readings {
    margin-top: 24px;
  }

  .readings th {
    height: 32px;
    border-bottom: 1px solid #dee2e6;
  }

  .readings td {
    height: 37px;
    border-bottom: 1px solid #dee2e6;
  }

  .c-device {
    width: 19.2%;
  }

  .c-date {
    width: 21.6%;
  }

  .c-time {
    width: 11.5%;
  }

  .c-hum {
    width: 21%;
  }

  .pill {
    display: inline-block;
    padding: 0 8px;
    border-radius: 6px;
    font-size: 12px;
    font-weight: 700;
    line-height: 28px;
    vertical-align: middle;
  }

  .cyan {
    background: #e6f9fd;
    color: #22c0e2;
  }

  .amber {
    background: #fff8e4;
    color: #f6bd28;
  }

  .devices th,
  .devices td {
    padding: 0 8px;
  }

  .devices th {
    height: 41px;
    border-bottom: 1px solid #e6e8eb;
  }

  .devices td {
    height: 53px;
  }

  .devices th:first-child,
  .devices td:first-child {
    padding-left: 24px;
  }

  .devices th:last-child,
  .devices td:last-child {
    padding-right: 24px;
  }

  .c-name {
    width: 20.5%;
  }

  .c-state {
    width: 30.2%;
  }

  .c-mods {
    width: 20%;
  }

  .online {
    display: inline-flex;
    align-items: flex-end;
    gap: 10px;
    color: #198754;
    font-size: 12px;
    font-weight: 600;
    line-height: 12px;
    vertical-align: middle;
  }

  .online i {
    width: 22px;
    height: 22px;
    border-radius: 50%;
    background: #60ac87;
  }

  .modules {
    display: flex;
    gap: 8px;
    color: #6c757d;
  }

  .scrollbar {
    display: flex;
    flex: none;
    flex-direction: column;
    align-items: center;
    width: 15px;
    padding: 10px 0 8px;
    background: #fcfcfc;
  }

  .up,
  .down {
    border: 4px solid transparent;
  }

  .up {
    border-top: 0;
    border-bottom: 5px solid #8b8b8b;
  }

  .down {
    margin-top: auto;
    border-bottom: 0;
    border-top: 5px solid #8b8b8b;
  }

  .thumb {
    width: 9px;
    height: 39%;
    margin-top: 8px;
    border-radius: 5px;
    background: #8b8b8b;
  }
</style>
